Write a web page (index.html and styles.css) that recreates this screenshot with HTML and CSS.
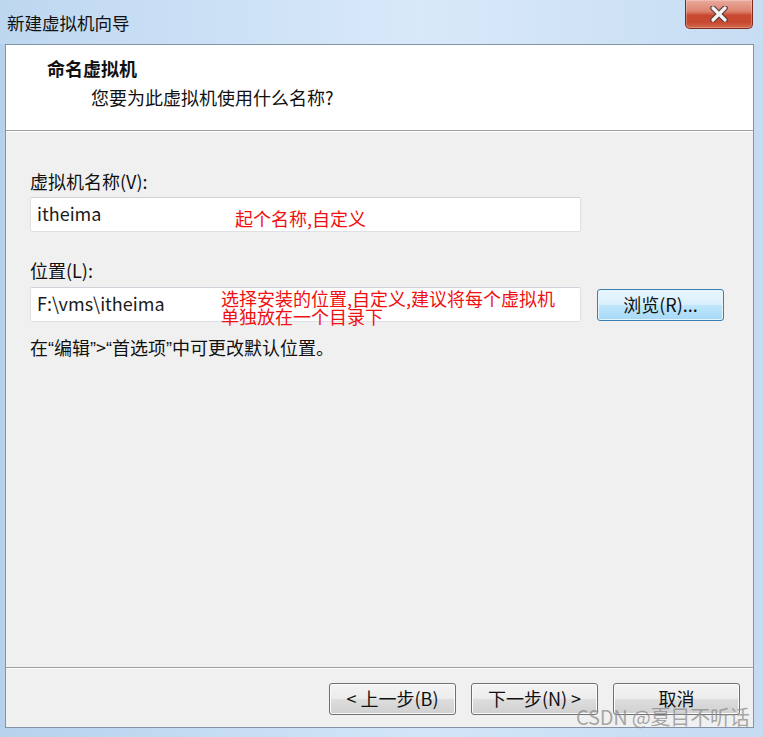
FILE: index.html
```html
<!DOCTYPE html>
<html>
<head>
<meta charset="utf-8">
<link rel="stylesheet" href="styles.css">
</head>
<body>
<div class="window">
  <div class="titlebar">
    <div class="title">新建虚拟机向导</div>
    <div class="close">
      <svg width="20" height="16" viewBox="0 0 20 16">
        <path d="M4 2 L16 14 M16 2 L4 14" stroke="#5a3a36" stroke-width="5.5" stroke-linecap="round"/>
        <path d="M4 2 L16 14 M16 2 L4 14" stroke="#f4f4f4" stroke-width="3.2" stroke-linecap="round"/>
      </svg>
    </div>
  </div>
  <div class="client">
    <div class="header">
      <div class="h-title">命名虚拟机</div>
      <div class="h-sub">您要为此虚拟机使用什么名称?</div>
    </div>
    <div class="body">
      <div class="label">虚拟机名称(V):</div>
      <div class="row">
        <div class="input">itheima
          <div class="note note1">起个名称,自定义</div>
        </div>
      </div>
      <div class="label label2">位置(L):</div>
      <div class="row">
        <div class="input">F:\vms\itheima
          <div class="note note2">选择安装的位置,自定义,建议将每个虚拟机<br>单独放在一个目录下</div>
        </div>
        <div class="btn btn-hot">浏览(R)...</div>
      </div>
      <div class="hint">在<span class="q">“</span>编辑<span class="q">”</span>&gt;<span class="q">“</span>首选项<span class="q">”</span>中可更改默认位置。</div>
    </div>
    <div class="footer">
      <div class="btn">&lt; 上一步(B)</div>
      <div class="btn">下一步(N) &gt;</div>
      <div class="btn">取消</div>
    </div>
  </div>
  <div class="watermark">CSDN @夏目不听话</div>
</div>
</body>
</html>
```
FILE: styles.css
```css
body {
  margin: 0;
}
.window {
  width: 763px;
  height: 737px;
  display: flex;
  flex-direction: column;
  position: relative;
  overflow: hidden;
  font-family: "Noto Sans CJK SC", "Noto Sans", sans-serif;
  color: #111;
  background: linear-gradient(to right, #b7d1ec 0, #c6ddf4 30%, #d3e6f8 55%, #c4dbf2 100%);
}
.titlebar {
  height: 44px;
  display: flex;
  align-items: flex-start;
  background: linear-gradient(to right, #bed7f0 0, #cfe3f7 35%, #d8e9f9 55%, #c7ddf3 100%);
}
.title {
  font-size: 17.5px;
  line-height: 44px;
  padding-top: 1px;
  padding-left: 7px;
}
.close {
  margin-left: auto;
  margin-right: 10px;
  width: 66px;
  height: 28px;
  border: 1px solid #7e2a1c;
  border-top: none;
  border-radius: 0 0 5px 5px;
  background: linear-gradient(to bottom, #e9ab9d 0, #dc8470 40%, #c8472f 55%, #c64a31 80%, #d46a4c 100%);
  display: flex;
  align-items: center;
  justify-content: center;
  box-shadow: inset 0 0 0 1px rgba(255,255,255,0.25);
}
.client {
  flex: 1;
  margin: 0 9px 9px 5px;
  border: 1px solid #8494a6;
  display: flex;
  flex-direction: column;
  background: #f0f0f0;
}
.header {
  height: 85px;
  background: #fff;
  border-bottom: 1px solid #a0a0a0;
  box-shadow: 0 1px 0 #fff;
  box-sizing: content-box;
}
.h-title {
  font-size: 18px;
  font-weight: bold;
  line-height: 24px;
  margin-top: 11px;
  padding-left: 41px;
}
.h-sub {
  font-size: 18px;
  line-height: 24px;
  margin-top: 5px;
  padding-left: 85px;
}
.body {
  flex: 1;
  padding: 38px 0 0 24px;
}
.label {
  font-size: 18px;
  line-height: 24px;
  margin-bottom: 4px;
}
.label2 {
  margin-top: 26px;
  margin-bottom: 5px;
}
.row {
  display: flex;
  align-items: center;
  gap: 16px;
}
.input {
  position: relative;
  width: 551px;
  height: 35px;
  box-sizing: border-box;
  background: #fff;
  border: 1px solid #dde1e6;
  border-top-color: #cfd3d9;
  border-radius: 2px;
  font-size: 18px;
  line-height: 31px;
  padding-left: 6px;
  color: #1a1a1a;
}
.note {
  position: absolute;
  color: #f01010;
  font-size: 18px;
  line-height: 18px;
  white-space: nowrap;
}
.note1 {
  left: 204px;
  top: 11px;
}
.note2 {
  left: 190px;
  top: 1px;
}
.hint {
  font-size: 18px;
  line-height: 24px;
  margin-top: 13px;
}
.q {
  font-family: "Liberation Sans", sans-serif;
}
.btn {
  width: 127px;
  height: 32px;
  box-sizing: border-box;
  border: 1px solid #707070;
  border-radius: 3px;
  background: linear-gradient(to bottom, #f4f4f4 0, #ececec 48%, #dddddd 52%, #d0d0d0 100%);
  box-shadow: inset 0 0 0 1px #fbfbfb;
  font-size: 18px;
  line-height: 29px;
  text-align: center;
  color: #111;
}
.btn-hot {
  border-color: #3c7fb1;
  background: linear-gradient(to bottom, #eaf6fd 0, #d9f0fc 48%, #bee6fd 52%, #a7d9f5 100%);
  box-shadow: inset 0 0 0 1px #e6f4fc;
}
.footer {
  height: 59px;
  box-sizing: content-box;
  border-top: 1px solid #a0a0a0;
  box-shadow: inset 0 1px 0 #fff;
  display: flex;
  justify-content: flex-end;
  align-items: flex-start;
  gap: 15px;
  padding-right: 13px;
}
.footer .btn {
  margin-top: 15px;
}
.watermark {
  position: absolute;
  left: 576px;
  top: 705px;
  font-size: 20px;
  line-height: 24px;
  color: rgba(140, 140, 140, 0.75);
  white-space: nowrap;
  letter-spacing: -0.2px;
}
```
